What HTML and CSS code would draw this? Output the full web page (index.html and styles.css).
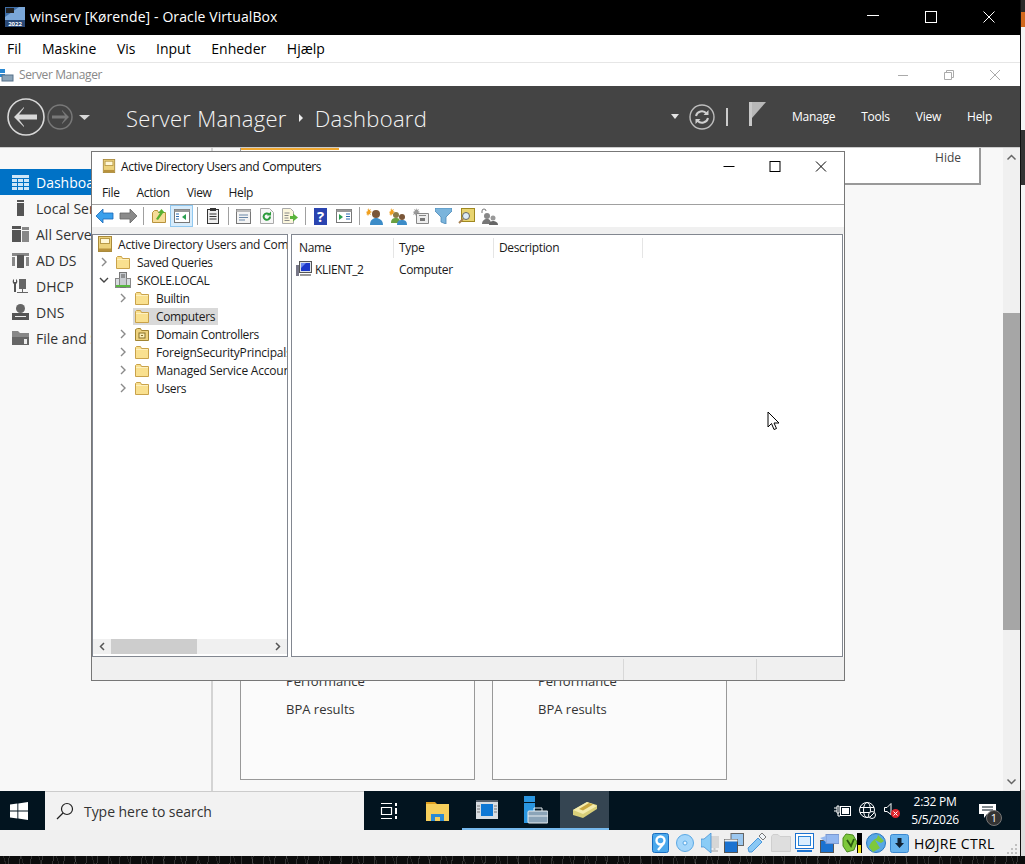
FILE: index.html
```html
<!DOCTYPE html>
<html lang="da">
<head>
    <meta charset="UTF-8">
    <title>winserv [Kørende] - Oracle VirtualBox</title>
    <link rel="stylesheet" href="styles.css">
</head>
<body>
<svg class="defs" width="0" height="0">
    <symbol id="folder" viewBox="0 0 16 16">
        <path d="M1.500 3.500V14.500H14.500V4.500H7.500L6.500 2.500H2.500Z" fill="#f9e08f" stroke="#c9a24a"/>
        <path d="M2 5.500H14" stroke="#fdf0c0" fill="none"/>
    </symbol>
    <symbol id="chev-r" viewBox="0 0 8 10"><path d="M2 1l4 4-4 4" fill="none" stroke="#8a8a8a" stroke-width="1.400"/></symbol>
    <symbol id="chev-d" viewBox="0 0 10 8"><path d="M1 2l4 4 4-4" fill="none" stroke="#444" stroke-width="1.400"/></symbol>
    <symbol id="book" viewBox="0 0 16 16">
        <rect x="1.500" y="0.500" width="13" height="15" fill="#ecd27c" stroke="#a98a3c"/>
        <rect x="3.500" y="2.500" width="9" height="5" fill="#fff8d8" stroke="#b89a48"/>
        <rect x="2" y="12.500" width="12" height="2.500" fill="#b8923c"/>
    </symbol>
</svg>

<div class="screen">
    <div class="vbox">
        <div class="vm-title">
            <svg class="vm-logo" width="20" height="20" viewBox="0 0 20 20">
                <rect width="20" height="20" fill="#3f6fa8"/>
                <path d="M0 20V10L14 0H20V20Z" fill="#7aa7d8"/>
                <rect y="13" width="20" height="7" fill="#2a4a78"/>
                <rect x="1" y="1" width="8" height="5" fill="#222"/>
                <text x="10" y="19" class="vm-logo-text">2022</text>
            </svg>
            <span class="vm-title-text">winserv [Kørende] - Oracle VirtualBox</span>
            <div class="win-btns vm-btns">
                <svg width="58" height="14" viewBox="0 0 14 14" class="wb"><path d="M1 5.500H13" stroke="#fff"/></svg>
                <svg width="58" height="14" viewBox="0 0 14 14" class="wb"><rect x="1.500" y="1.500" width="11" height="11" fill="none" stroke="#fff"/></svg>
                <svg width="58" height="14" viewBox="0 0 14 14" class="wb"><path d="M1.500 1.500l11 11M12.500 1.500l-11 11" stroke="#fff"/></svg>
            </div>
        </div>
        <div class="vm-menu">
            <span>Fil</span><span>Maskine</span><span>Vis</span><span>Input</span><span>Enheder</span><span>Hjælp</span>
        </div>

        <div class="guest">
            <div class="sm-title">
                <svg width="14" height="14" viewBox="0 0 14 14">
                    <rect width="5" height="4" y="1" fill="#2a8ad4"/><rect width="5" height="3" y="6" fill="#2a8ad4"/>
                    <rect x="2" y="7" width="11" height="6" fill="#8ba4b8" stroke="#55718a"/>
                </svg>
                <span class="sm-title-text">Server Manager</span>
                <div class="win-btns sm-btns">
                    <svg width="46" height="12" viewBox="0 0 12 12"><path d="M1 6.500H11" stroke="#aaa"/></svg>
                    <svg width="46" height="12" viewBox="0 0 12 12"><path d="M1.500 3.500h7v7h-7zM3.500 3.500v-2h7v7h-2" fill="none" stroke="#aaa"/></svg>
                    <svg width="46" height="12" viewBox="0 0 12 12"><path d="M1 1l10 10M11 1L1 11" stroke="#aaa"/></svg>
                </div>
            </div>

            <div class="sm-head">
                <svg class="nav" width="90" height="38" viewBox="0 0 90 38">
                    <circle cx="19" cy="19" r="18" fill="none" stroke="#d8d8d8" stroke-width="1.600"/>
                    <path d="M7 19l10-10v1l-5 6.500h18v5H12l5 6.500v1z" fill="#d8d8d8"/>
                    <circle cx="53" cy="19" r="12" fill="none" stroke="#787878" stroke-width="1.500"/>
                    <path d="M62 19l-7-7v1l3 4.500H45v3h13l-3 4.500v1z" fill="#787878"/>
                    <path d="M72 17h11l-5.500 5z" fill="#d8d8d8"/>
                </svg>
                <div class="crumb">
                    <span>Server Manager</span>
                    <svg width="6" height="10" viewBox="0 0 6 10"><path d="M1 1l4 4-4 4z" fill="#eee"/></svg>
                    <span>Dashboard</span>
                </div>
                <div class="head-tools">
                    <svg width="8" height="5" viewBox="0 0 8 5"><path d="M0 0h8L4 5z" fill="#e4e4e4"/></svg>
                    <svg class="refresh" width="26" height="26" viewBox="0 0 26 26">
                        <circle cx="13" cy="13" r="12" fill="none" stroke="#bdbdbd" stroke-width="1.400"/>
                        <path d="M7 12a6 6 0 0 1 10.500-2.500M19 14a6 6 0 0 1-10.500 2.500" fill="none" stroke="#cfcfcf" stroke-width="2"/>
                        <path d="M19.500 6v5h-5zM6.500 20v-5h5z" fill="#cfcfcf"/>
                    </svg>
                    <span class="pipe"></span>
                    <svg class="flag" width="18" height="24" viewBox="0 0 18 24">
                        <rect width="3" height="24" fill="#c8c8c8"/><path d="M3 0h14L3 16z" fill="#b8b8b8"/>
                    </svg>
                    <nav class="head-menu">
                        <span>Manage</span><span>Tools</span><span>View</span><span>Help</span>
                    </nav>
                </div>
            </div>

            <div class="sm-body">
                <aside class="sidebar">
                    <div class="side-item active">
                        <svg width="17" height="15" viewBox="0 0 17 15"><path d="M0 0h17v3H0zM0 4h5v3H0zM6 4h5v3H6zM12 4h5v3h-5zM0 8h5v3H0zM6 8h5v3H6zM12 8h5v3h-5zM0 12h5v3H0zM6 12h5v3H6zM12 12h5v3h-5z" fill="#cfe6f7"/></svg>
                        <span>Dashboard</span>
                    </div>
                    <div class="side-item">
                        <svg width="17" height="16" viewBox="0 0 17 16"><path d="M5 0h7v2H5zM5 3h7v13H5z" fill="#555"/></svg>
                        <span>Local Server</span>
                    </div>
                    <div class="side-item">
                        <svg width="17" height="16" viewBox="0 0 17 16"><path d="M0 0h9v3H0zM0 4h9v12H0z" fill="#555"/><path d="M10 1h7v3h-7zM10 5h7v11h-7z" fill="#888"/></svg>
                        <span>All Servers</span>
                    </div>
                    <div class="side-item">
                        <svg width="17" height="16" viewBox="0 0 17 16"><path d="M0 1h17v3H0zM0 5h3v9H0zM14 5h3v9h-3z" fill="#888"/><path d="M5 3h7v13H5z" fill="#555"/></svg>
                        <span>AD DS</span>
                    </div>
                    <div class="side-item">
                        <svg width="17" height="16" viewBox="0 0 17 16"><path d="M2 1a3 3 0 0 0 0 5v8h2V6a3 3 0 0 0 0-5v3H2z" fill="#555"/><path d="M7 1h7v10H7zM10 11h1v3h5v1H5v-1h5z" fill="#666"/></svg>
                        <span>DHCP</span>
                    </div>
                    <div class="side-item">
                        <svg width="17" height="16" viewBox="0 0 17 16"><circle cx="8.500" cy="4.500" r="4.500" fill="#666"/><path d="M0 9h17v7H0z" fill="#555"/><path d="M3 12h11v1H3z" fill="#eee"/></svg>
                        <span>DNS</span>
                    </div>
                    <div class="side-item">
                        <svg width="17" height="16" viewBox="0 0 17 16"><path d="M0 1h6l2 2h9v4H0z" fill="#888"/><path d="M0 7h17v8H0z" fill="#666"/><path d="M12 9h3v5h-3z" fill="#eee"/></svg>
                        <span>File and Storage Services</span>
                    </div>
                </aside>

                <main class="sm-main">
                    <section class="quick">
                        <div class="quick-tab"></div>
                        <span class="hide">Hide</span>
                    </section>
                    <div class="tiles">
                        <div class="tile">
                            <p>Manageability</p><p>Events</p><p>Services</p><p>Performance</p><p>BPA results</p>
                        </div>
                        <div class="tile">
                            <p>Manageability</p><p>Events</p><p>Services</p><p>Performance</p><p>BPA results</p>
                        </div>
                    </div>
                </main>

                <div class="sm-scroll">
                    <svg width="11" height="7" viewBox="0 0 11 7"><path d="M1.500 5.500l4-4 4 4" fill="none" stroke="#666" stroke-width="1.500"/></svg>
                    <div class="sm-thumb"></div>
                    <svg width="11" height="7" viewBox="0 0 11 7"><path d="M1.500 1.500l4 4 4-4" fill="none" stroke="#666" stroke-width="1.500"/></svg>
                </div>
            </div>

            <div class="taskbar">
                <div class="start">
                    <svg width="18" height="18" viewBox="0 0 18 18"><path d="M0 2.600l7.400-1v7H0zM8.300 1.400L18 0v8.600H8.300zM0 9.500h7.400v7l-7.400-1zM8.300 9.500H18V18l-9.700-1.400z" fill="#fff"/></svg>
                </div>
                <div class="search">
                    <svg width="18" height="18" viewBox="0 0 18 18"><circle cx="11" cy="7" r="5.500" fill="none" stroke="#222" stroke-width="1.200"/><path d="M7 11l-6 6" stroke="#222" stroke-width="1.300"/></svg>
                    <span>Type here to search</span>
                </div>
                <div class="task">
                    <svg width="18" height="18" viewBox="0 0 18 18"><path d="M1 1.500h11M1 16.500h11M1.500 5.500h10v7h-10z" fill="none" stroke="#fff" stroke-width="1.200"/><path d="M15 1h2v3h-2zM15 6h2v6h-2zM15 14h2v3h-2z" fill="#fff"/></svg>
                </div>
                <div class="task">
                    <svg width="23" height="20" viewBox="0 0 23 20"><path d="M0 1h9l2 2H0z" fill="#e0a020"/><path d="M0 3h23v17H0z" fill="#f6cf5c"/><path d="M5 13h13v7H5z" fill="#2a8ad4"/><path d="M9 16h5v4H9z" fill="#f6cf5c"/></svg>
                </div>
                <div class="task on">
                    <svg width="22" height="19" viewBox="0 0 22 19"><rect width="22" height="19" fill="#d8dde2"/><rect y="0" width="22" height="2" fill="#555f6a"/><rect x="5" y="4" width="12" height="12" fill="#0f78d4"/><path d="M1 6h3M1 9h3M1 12h3M18 6h3M18 9h3M18 12h3" stroke="#777"/></svg>
                </div>
                <div class="task on">
                    <svg width="24" height="28" viewBox="0 0 24 28"><path d="M0 0h11v6H0zM0 7h11v20H0z" fill="#2a96e0"/><rect x="4" y="15" width="20" height="12" rx="1" fill="#8ba4b8" stroke="#e8eef2"/><path d="M10 15v-3h8v3M4 20h20" fill="none" stroke="#e8eef2"/></svg>
                </div>
                <div class="task on current">
                    <svg width="24" height="18" viewBox="0 0 24 18"><path d="M0 9l14-8 10 3v4L10 17 0 14z" fill="#d8cf7a"/><path d="M0 9l10 4 14-8-10-4z" fill="#f4ecae"/><path d="M6 8l10-6 4 1.500-10 6z" fill="#c9a840"/></svg>
                </div>
                <div class="tray">
                    <svg width="17" height="12" viewBox="0 0 17 12"><path d="M0 3h3M0 6h3M3 1h2v7H3zM4 8v3h2" fill="none" stroke="#fff"/><rect x="6.500" y="1.500" width="10" height="9" fill="none" stroke="#fff"/><rect x="8" y="3" width="7" height="6" fill="#fff"/></svg>
                    <svg width="17" height="17" viewBox="0 0 17 17"><g fill="none" stroke="#fff"><circle cx="8" cy="8" r="7.500"/><ellipse cx="8" cy="8" rx="3.500" ry="7.500"/><path d="M1 5.500h14M1 10.500h14"/></g><circle cx="13" cy="13" r="3.500" fill="#02141f" stroke="#fff"/><path d="M11 15l4-4" stroke="#fff"/></svg>
                    <svg width="16" height="15" viewBox="0 0 16 15"><path d="M.5 4.500h2.500l4-4v11l-4-3H.5z" fill="none" stroke="#fff"/><circle cx="11.500" cy="10.500" r="4.500" fill="#e0242c"/><path d="M9.500 8.500l4 4M13.500 8.500l-4 4" stroke="#fff"/></svg>
                    <div class="clock"><span>2:32 PM</span><span>5/5/2026</span></div>
                    <div class="notify">
                        <svg width="17" height="14" viewBox="0 0 17 14"><path d="M0 0h17v10H8l-3 4v-4H0z" fill="#fff"/><path d="M3 3h11M3 6h11" stroke="#02141f"/></svg>
                        <span class="badge">1</span>
                    </div>
                </div>
            </div>
        </div>

        <div class="vm-status">
            <svg width="17" height="20" viewBox="0 0 17 20"><rect x=".5" y=".5" width="16" height="19" rx="2" fill="#4aa8ec" stroke="#1a6ec0"/><circle cx="8.500" cy="7.500" r="4" fill="none" stroke="#fff" stroke-width="2.400"/><path d="M12 10l-6 7" stroke="#fff" stroke-width="2.400"/></svg>
            <svg width="18" height="18" viewBox="0 0 18 18"><circle cx="9" cy="9" r="8.500" fill="#a4d6fa" stroke="#5aa8e4"/><circle cx="9" cy="9" r="2" fill="#eaf6ff" stroke="#5aa8e4"/></svg>
            <svg width="19" height="20" viewBox="0 0 19 20"><rect x="9" y="3" width="9" height="12" fill="#d6d6d6"/><path d="M10 18h7M13.500 15v3" stroke="#c8c8c8" stroke-width="2"/><path d="M0 6h3l7-6v20l-7-6H0z" fill="#8accf6" stroke="#3a88d0" stroke-width=".7"/></svg>
            <svg width="20" height="20" viewBox="0 0 20 20"><rect x="7" y=".5" width="12.500" height="12" fill="#9cc8f0" stroke="#666"/><rect x=".5" y="6.500" width="13" height="13" fill="#1b72d0" stroke="#555"/><rect x=".5" y="6.500" width="13" height="2" fill="#eee"/></svg>
            <svg width="19" height="20" viewBox="0 0 19 20"><path d="M1 15L11 5l4 4L5 19H2z" fill="#8ac8f4" stroke="#4a98dc"/><path d="M12 3l3-3 4 4-3 3z" fill="#f0f4f8" stroke="#777"/></svg>
            <svg width="20" height="18" viewBox="0 0 20 18"><path d="M.5 2.500V17.500h19V2.500H9L7 .5H2z" fill="#dedede" stroke="#cfcfcf"/></svg>
            <svg width="19" height="20" viewBox="0 0 19 20"><rect x=".5" y=".5" width="18" height="15" fill="#fff" stroke="#1b72d0"/><rect x="3" y="3" width="13" height="10" fill="#2a84d8"/><rect x="4" y="4" width="11" height="8" fill="#dbeeff"/><path d="M2 18h15" stroke="#1b72d0" stroke-width="2"/></svg>
            <svg width="19" height="19" viewBox="0 0 19 19"><rect x="0.500" y="6.500" width="13" height="12" fill="#1b72d0" stroke="#555"/><rect x="6" y="0.500" width="13" height="9" fill="#94b8f0" stroke="#7a98d0"/><path d="M0 4l6-2v6z" fill="#94b8f0"/></svg>
            <svg width="20" height="20" viewBox="0 0 20 20"><path d="M1 5l3-4 7 1 4 7-3 8-7 2-4-6z" fill="#7ec83c" stroke="#4a8a1c"/><path d="M5 7l4 6 3-7" fill="none" stroke="#2a5a10" stroke-width="1.800"/><rect x="15" y="0" width="5" height="20" fill="#000"/><rect x="16" y="12" width="3" height="8" fill="#f0e020"/></svg>
            <svg width="20" height="20" viewBox="0 0 20 20"><circle cx="10" cy="10" r="9.500" fill="#5aa8e4" stroke="#2a78c0"/><path d="M3 14c2-6 6-8 8-9l1-3 6 6-3 2-6-3 5 8-7 4z" fill="#7ec83c"/></svg>
            <svg width="19" height="19" viewBox="0 0 19 19"><rect x=".5" y=".5" width="18" height="18" rx="2" fill="#68b4ee" stroke="#3a88d0"/><path d="M7.500 4h4v5H14l-4.500 5L5 9h2.500z" fill="#123"/></svg>
            <span class="host-key">HØJRE CTRL</span>
            <svg class="grip" width="12" height="12" viewBox="0 0 12 12"><path d="M9 1h2v2H9zM5 5h2v2H5zM9 5h2v2H9zM1 9h2v2H1zM5 9h2v2H5zM9 9h2v2H9z" fill="#c0c0c0"/></svg>
        </div>
    </div>
    <div class="strip"></div>

    <!-- guest window, sits over the dashboard -->
    <div class="aduc">
        <div class="aduc-title">
            <svg width="14" height="16"><use href="#book"/></svg>
            <span>Active Directory Users and Computers</span>
            <div class="win-btns aduc-btns">
                <svg width="46" height="11" viewBox="0 0 11 11"><path d="M0 5.500H11" stroke="#000"/></svg>
                <svg width="46" height="11" viewBox="0 0 11 11"><rect x=".5" y=".5" width="10" height="10" fill="none" stroke="#000"/></svg>
                <svg width="46" height="11" viewBox="0 0 11 11"><path d="M.5.500l10 10M10.500.500l-10 10" stroke="#000"/></svg>
            </div>
        </div>
        <div class="aduc-menu"><span>File</span><span>Action</span><span>View</span><span>Help</span></div>

        <div class="toolbar">
            <div class="tb"><svg width="18" height="14" viewBox="0 0 18 14"><path d="M0 7l7-7v4h10v6H7v4z" fill="#3aa0ec" stroke="#1a68b8" stroke-width=".8"/></svg></div>
            <div class="tb"><svg width="18" height="14" viewBox="0 0 18 14"><path d="M18 7l-7-7v4H1v6h10v4z" fill="#8a8a8a" stroke="#666" stroke-width=".8"/></svg></div>
            <div class="tb-sep"></div>
            <div class="tb"><svg width="16" height="16" viewBox="0 0 16 16"><path d="M1.500 4.500v10h13v-10H7.500l-1-2h-3z" fill="#f6dc98" stroke="#b8923c"/><path d="M5 11l4-6H7l3.500-4L14 5h-2l-5 7z" fill="#58b030"/></svg></div>
            <div class="tb tb-on"><svg width="16" height="14" viewBox="0 0 16 14"><rect x=".5" y=".5" width="15" height="13" fill="#fff" stroke="#777"/><rect x=".5" y=".5" width="15" height="2.500" fill="#999"/><path d="M2 5h3M2 7.500h3M2 10h3" stroke="#2a6ab0"/><path d="M12 5v6L8 8z" fill="#2aa050"/></svg></div>
            <div class="tb-sep"></div>
            <div class="tb"><svg width="12" height="16" viewBox="0 0 12 16"><rect x=".5" y="1.500" width="11" height="14" fill="#eee" stroke="#333"/><rect x="3" y="0" width="6" height="3" fill="#333"/><path d="M2.500 6h7M2.500 8.500h7M2.500 11h7" stroke="#333"/></svg></div>
            <div class="tb-sep"></div>
            <div class="tb"><svg width="15" height="15" viewBox="0 0 15 15"><rect x=".5" y=".5" width="14" height="14" fill="#f4f4f4" stroke="#777"/><rect x=".5" y=".5" width="14" height="2.500" fill="#bbb"/><path d="M3 6h9M3 8.500h9M3 11h6" stroke="#6a88a8"/></svg></div>
            <div class="tb"><svg width="14" height="16" viewBox="0 0 14 16"><path d="M.5.500h9l4 4v11H.5z" fill="#f6f6f6" stroke="#aaa"/><path d="M10 8.500a3.200 3.200 0 1 1-1-2.200" fill="none" stroke="#2a9a3a" stroke-width="2"/><path d="M11 3.500v4H7z" fill="#2a9a3a"/></svg></div>
            <div class="tb"><svg width="16" height="16" viewBox="0 0 16 16"><path d="M.5.500h8l3 3v12H.5z" fill="#fbf6dc" stroke="#aaa"/><path d="M2.500 5h5M2.500 7.500h4M2.500 10h4M2.500 12.500h5" stroke="#888"/><path d="M8 8h3V5.500L16 9.500l-5 4V11H8z" fill="#5ab43a"/></svg></div>
            <div class="tb-sep"></div>
            <div class="tb"><svg width="13" height="17" viewBox="0 0 13 17"><rect width="13" height="17" fill="#2a44b0"/><text x="6.500" y="14" class="help-q">?</text></svg></div>
            <div class="tb"><svg width="16" height="14" viewBox="0 0 16 14"><rect x=".5" y=".5" width="15" height="13" fill="#fff" stroke="#777"/><rect x=".5" y=".5" width="15" height="2.500" fill="#999"/><path d="M3 5v6l4-3z" fill="#2aa050"/><path d="M10 5h4M10 7.500h4M10 10h4" stroke="#2a6ab0"/></svg></div>
            <div class="tb-sep"></div>
            <div class="tb"><svg width="18" height="17" viewBox="0 0 18 17"><path d="M2 0l1 2 2-1-1 2 2 1-2 1 1 2-2-1-1 2-1-2-1 1 1-2-1-1 2-1-1-2 1 1z" fill="#f0a020"/><circle cx="10" cy="6" r="4" fill="#7a5638"/><path d="M4 17c0-5 3-7 6-7s7 2 7 7z" fill="#3c8cc8"/></svg></div>
            <div class="tb"><svg width="18" height="17" viewBox="0 0 18 17"><path d="M2 0l1 2 2-1-1 2 2 1-2 1 1 2-2-1-1 2-1-2-1 1 1-2-1-1 2-1-1-2 1 1z" fill="#f0a020"/><circle cx="7" cy="7" r="3" fill="#8a7a48"/><path d="M2 15c0-4 2-5 5-5s4 1 4 5z" fill="#6aa040"/><circle cx="13" cy="9" r="3" fill="#7a5638"/><path d="M8 17c0-4 2-5 5-5s5 1 5 5z" fill="#3c8cc8"/></svg></div>
            <div class="tb"><svg width="16" height="16" viewBox="0 0 16 16"><path d="M3 0l1 2 2-1-1 2 2 1-2 1 1 2-2-1-1 2-1-2-2 1 1-2-1-1 2-1-1-2 2 1z" fill="#999"/><path d="M3.500 5.500h12v10h-12z" fill="#eee" stroke="#888"/><path d="M6 7h7v1H6z" fill="#888"/><rect x="7" y="10" width="5" height="3" fill="#777"/></svg></div>
            <div class="tb"><svg width="17" height="16" viewBox="0 0 17 16"><path d="M0 0h17v3l-6 6v7l-5-2V9L0 3z" fill="#7ab4dc" stroke="#4a88b8" stroke-width=".8"/></svg></div>
            <div class="tb"><svg width="17" height="16" viewBox="0 0 17 16"><rect x="3.500" y=".5" width="13" height="13" fill="#e8d470" stroke="#a08820"/><circle cx="8" cy="8" r="3.500" fill="#dcecf8" stroke="#666"/><path d="M5 11L1 15" stroke="#a88050" stroke-width="2"/></svg></div>
            <div class="tb"><svg width="17" height="17" viewBox="0 0 17 17"><path d="M1 5V3a2 2 0 0 1 4 0" fill="none" stroke="#777"/><circle cx="6" cy="8" r="3" fill="#888"/><path d="M1 16c0-3 2-5 5-5s4 2 4 5z" fill="#777"/><circle cx="12" cy="10" r="2.500" fill="#999"/><path d="M8 17c0-3 2-4 4-4s5 1 5 4z" fill="#666"/></svg></div>
        </div>
        <div class="band"></div>

        <div class="panes">
            <div class="tree">
                <div class="tree-rows">
                    <div class="node root wide"><svg width="16" height="16"><use href="#book"/></svg><span>Active Directory Users and Computers</span></div>
                    <div class="node lvl1"><svg class="exp" width="8" height="10"><use href="#chev-r"/></svg><svg width="16" height="16"><use href="#folder"/></svg><span>Saved Queries</span></div>
                    <div class="node lvl1"><svg class="exp exp-open" width="10" height="8"><use href="#chev-d"/></svg>
                        <svg width="16" height="16" viewBox="0 0 16 16"><rect x="4.500" y=".5" width="7" height="15" fill="#c8ccd0" stroke="#777"/><rect x=".5" y="6.500" width="4" height="9" fill="#d8dce0" stroke="#888"/><rect x="11.500" y="6.500" width="4" height="9" fill="#d8dce0" stroke="#888"/><path d="M6 3h4M6 5h4" stroke="#555"/><rect x="1" y="13" width="14" height="2" fill="#58b840"/></svg>
                        <span>SKOLE.LOCAL</span></div>
                    <div class="node lvl2"><svg class="exp" width="8" height="10"><use href="#chev-r"/></svg><svg width="16" height="16"><use href="#folder"/></svg><span>Builtin</span></div>
                    <div class="node lvl2"><i class="exp-gap"></i><span class="sel"><svg width="16" height="16"><use href="#folder"/></svg><span>Computers</span></span></div>
                    <div class="node lvl2"><svg class="exp" width="8" height="10"><use href="#chev-r"/></svg>
                        <svg width="16" height="16" viewBox="0 0 16 16"><path d="M1.500 3.500v11h13v-10H7.500l-1-2h-3z" fill="#eed27e" stroke="#a08432"/><rect x="5" y="7" width="6" height="5" fill="#fbeeb8" stroke="#887028"/><rect x="7" y="9" width="2" height="1" fill="#887028"/></svg>
                        <span>Domain Controllers</span></div>
                    <div class="node lvl2 wide"><svg class="exp" width="8" height="10"><use href="#chev-r"/></svg><svg width="16" height="16"><use href="#folder"/></svg><span>ForeignSecurityPrincipals</span></div>
                    <div class="node lvl2 wide"><svg class="exp" width="8" height="10"><use href="#chev-r"/></svg><svg width="16" height="16"><use href="#folder"/></svg><span>Managed Service Accounts</span></div>
                    <div class="node lvl2"><svg class="exp" width="8" height="10"><use href="#chev-r"/></svg><svg width="16" height="16"><use href="#folder"/></svg><span>Users</span></div>
                </div>
                <div class="hscroll">
                    <svg width="6" height="9" viewBox="0 0 6 9"><path d="M5 1L1.500 4.500 5 8" fill="none" stroke="#555" stroke-width="1.500"/></svg>
                    <div class="hthumb-track"><div class="hthumb"></div></div>
                    <svg width="6" height="9" viewBox="0 0 6 9"><path d="M1 1l3.500 3.500L1 8" fill="none" stroke="#555" stroke-width="1.500"/></svg>
                </div>
            </div>
            <div class="list">
                <div class="list-head">
                    <span class="col-name">Name</span><span class="col-type">Type</span><span class="col-desc">Description</span>
                </div>
                <div class="list-row">
                    <span class="cell-name">
                        <svg width="16" height="16" viewBox="0 0 16 16"><rect x="3.500" y=".5" width="12" height="11" fill="#dfe4ea" stroke="#555"/><rect x="5" y="2" width="9" height="8" fill="#1c38c8"/><path d="M5 2h5L5 7z" fill="#6a88f0"/><rect x="0" y="4" width="3" height="11" fill="#778"/><path d="M4 13h11v2H4z" fill="#999"/></svg>
                        <span>KLIENT_2</span>
                    </span>
                    <span class="cell-type">Computer</span>
                </div>
                <svg class="cursor" width="13" height="20" viewBox="0 0 13 20"><path d="M1 1v15l3.500-3.500L7 18.500l2.500-1-2.500-5.500h5z" fill="#fff" stroke="#000"/></svg>
            </div>
        </div>
        <div class="aduc-status">
            <div class="st st-main"></div><div class="st st-mid"></div><div class="st st-end"></div>
        </div>
    </div>
</div>
</body>
</html>
```

FILE: styles.css
```css
* {
    box-sizing: border-box;
}

html, body {
    margin: 0;
    padding: 0;
}

body {
    font-family: "Open Sans", "Noto Sans", sans-serif;
    font-size: 12px;
    color: #222;
    overflow: hidden;
}

svg {
    display: block;
    flex-shrink: 0;
}

.defs {
    position: absolute;
}

.screen {
    position: relative;
    display: flex;
    width: 1025px;
    height: 864px;
    overflow: hidden;
    background-color: #0c0c0c;
    background-image:
        repeating-linear-gradient(97deg, transparent 0 3px, rgba(255, 255, 255, .16) 3px 4px, transparent 4px 11px),
        repeating-linear-gradient(74deg, transparent 0 5px, rgba(255, 255, 255, .1) 5px 6px, transparent 6px 17px);
}

.strip {
    width: 4px;
    height: 856px;
    background: linear-gradient(#2a2a2a 0 12px, #d2691e 12px 27px, #f4f4f4 27px 130px, #333 130px 185px, #f4f4f4 185px 790px, #ddd 790px);
}

.vbox {
    display: flex;
    flex-direction: column;
    width: 1021px;
    height: 856px;
    border-right: 1px solid #111;
}

/* virtualbox frame */
.vm-title {
    display: flex;
    align-items: center;
    height: 35px;
    padding: 0 2px 2px 5px;
    background: #000;
    color: #fff;
}

.vm-logo-text {
    font-size: 6px;
    font-weight: 700;
    fill: #fff;
    text-anchor: middle;
}

.vm-title-text {
    margin-left: 5px;
    font-size: 14px;
    letter-spacing: .1px;
}

.win-btns {
    display: flex;
    margin-left: auto;
}

.vm-menu {
    display: flex;
    align-items: center;
    gap: 20.600px;
    height: 28px;
    padding-left: 7px;
    background: #fff;
    border-bottom: 1px solid #e6e6e6;
    font-size: 14px;
    color: #000;
}

.guest {
    display: flex;
    flex-direction: column;
    height: 767px;
}

.vm-status {
    display: flex;
    align-items: center;
    height: 26px;
    padding-left: 652px;
    background: #f0f0f0;
}

.vm-status svg:nth-child(2) { margin-left: 7px; }
.vm-status svg:nth-child(3) { margin-left: 7px; }
.vm-status svg:nth-child(4) { margin-left: 4px; }
.vm-status svg:nth-child(5) { margin-left: 3px; }
.vm-status svg:nth-child(6) { margin-left: 5px; }
.vm-status svg:nth-child(7) { margin-left: 4px; }
.vm-status svg:nth-child(8) { margin-left: 6px; }
.vm-status svg:nth-child(9) { margin-left: 3px; }
.vm-status svg:nth-child(10) { margin-left: 4px; }
.vm-status svg:nth-child(11) { margin-left: 4px; }

.host-key {
    margin-left: 5px;
    font-size: 14px;
    letter-spacing: .3px;
    color: #000;
}

.grip {
    margin-left: auto;
    margin-right: 2px;
    align-self: flex-end;
    margin-bottom: 1px;
}

/* server manager */
.sm-title {
    display: flex;
    align-items: center;
    height: 23px;
    background: #fff;
}

.sm-title-text {
    margin-left: 5px;
    color: #888;
    letter-spacing: -.4px;
}

.sm-btns {
    margin-right: 2px;
}

.sm-head {
    display: flex;
    align-items: center;
    height: 62px;
    padding-left: 7px;
    background: #444;
    color: #fff;
    border-bottom: 1px solid #ccc;
}

.nav {
    margin-right: 29px;
}

.crumb {
    display: flex;
    align-items: center;
    gap: 11px;
    margin-top: 3px;
    font-size: 22px;
    font-weight: 300;
    letter-spacing: .3px;
    color: #f4f4f4;
}

.head-tools {
    display: flex;
    align-items: center;
    margin-left: auto;
}

.refresh {
    margin-left: 10px;
}

.pipe {
    width: 2px;
    height: 18px;
    margin-left: 11px;
    background: #ccc;
}

.flag {
    margin-left: 21px;
    margin-bottom: 6px;
}

.head-menu {
    display: flex;
    gap: 26px;
    margin-left: 25px;
    margin-right: 28px;
    letter-spacing: -.25px;
}

.sm-body {
    display: flex;
    flex: 1;
    min-height: 0;
    background: #f8f8f8;
}

.sidebar {
    width: 213px;
    padding-top: 21px;
    border-right: 2px solid #d4d4d4;
}

.side-item {
    display: flex;
    align-items: center;
    height: 26px;
    padding-left: 12px;
    gap: 7px;
    font-size: 14px;
    white-space: nowrap;
    color: #333;
}

.side-item.active {
    background: #0072c6;
    color: #fff;
}

.sm-main {
    display: flex;
    flex-direction: column;
    flex: 1;
    min-width: 0;
    padding: 0 22px 11px 27px;
}

.quick {
    position: relative;
    display: flex;
    justify-content: flex-end;
    height: 37px;
    padding: 1px 18px 0 0;
    background: #fff;
    border: solid #999;
    border-width: 0 2px 2px 1px;
    color: #444;
}

.quick-tab {
    position: absolute;
    left: 0;
    top: 0;
    width: 98px;
    height: 2px;
    background: #f0a830;
}

.tiles {
    display: flex;
    gap: 17px;
    margin-top: auto;
}

.tile {
    width: 235px;
    height: 240px;
    padding: 42px 0 0 45px;
    background: #fbfbfb;
    border: 1px solid #999;
    font-size: 13px;
    color: #333;
}

.tile p {
    margin: 0;
    height: 28px;
    line-height: 28px;
}

.sm-scroll {
    display: flex;
    flex-direction: column;
    align-items: center;
    justify-content: space-between;
    width: 17px;
    padding: 6px 0;
    background: #f0f0f0;
    position: relative;
}

.sm-thumb {
    position: absolute;
    left: 0;
    top: 165px;
    width: 17px;
    height: 317px;
    background: #a6a6a6;
}

/* taskbar */
.taskbar {
    display: flex;
    height: 39px;
    background: #02141f;
    color: #fff;
}

.start {
    display: flex;
    align-items: center;
    justify-content: center;
    width: 45px;
    padding-right: 7px;
}

.search {
    display: flex;
    align-items: center;
    gap: 10px;
    width: 319px;
    padding-left: 11px;
    background: #f2f2f2;
    border-top: 1px solid #ccc;
    font-size: 14px;
    letter-spacing: -.05px;
    color: #333;
}

.task {
    display: flex;
    align-items: center;
    justify-content: center;
    width: 49px;
    height: 100%;
}

.task.on {
    border-bottom: 2px solid #76b9ed;
}

.task.current {
    background: #354552;
}

.tray {
    display: flex;
    align-items: center;
    margin-left: auto;
    padding-right: 24px;
    gap: 8px;
}

.clock {
    display: flex;
    flex-direction: column;
    align-items: center;
    width: 66px;
    line-height: 18px;
    margin-left: -6px;
    letter-spacing: -.3px;
}

.notify {
    position: relative;
    margin-left: 3px;
}

.badge {
    position: absolute;
    left: 7px;
    top: 6px;
    width: 16px;
    height: 16px;
    border-radius: 50%;
    background: #333;
    border: 1px solid #777;
    font-size: 11px;
    line-height: 14px;
    text-align: center;
}

/* active directory window */
.aduc {
    position: absolute;
    left: 91px;
    top: 151px;
    display: flex;
    flex-direction: column;
    width: 754px;
    height: 530px;
    background: #fff;
    border: 1px solid #777;
    color: #1a1a1a;
    letter-spacing: -.35px;
}

.aduc-title {
    display: flex;
    align-items: center;
    height: 28px;
    padding-left: 10px;
    gap: 5px;
    color: #111;
}

.aduc-menu {
    display: flex;
    align-items: center;
    gap: 17px;
    height: 25px;
    padding-left: 10px;
    border-bottom: 1px solid #a0a0a0;
}

.toolbar {
    display: flex;
    align-items: center;
    height: 22px;
    padding-left: 1px;
}

.tb {
    display: flex;
    align-items: center;
    justify-content: center;
    width: 23px;
    height: 22px;
}

.tb-on {
    background: #d8ecfb;
    border: 1px solid #90c8f0;
}

.tb-sep {
    width: 8px;
    height: 18px;
    background: linear-gradient(#a0a0a0, #a0a0a0) center / 1px 100% no-repeat;
}

.help-q {
    font-size: 15px;
    font-weight: 700;
    fill: #fff;
    text-anchor: middle;
}

.band {
    height: 7px;
    background: #f0f0f0;
}

.panes {
    display: flex;
    gap: 3px;
    height: 423px;
    padding: 0 1px 0 0;
}

.tree {
    display: flex;
    flex-direction: column;
    width: 196px;
    border: 1px solid #828790;
}

.tree-rows {
    flex: 1;
    overflow: hidden;
}

.node {
    display: flex;
    align-items: center;
    height: 18px;
    white-space: nowrap;
}

.node.wide {
    letter-spacing: -.2px;
}

.root {
    padding-left: 4px;
}

.lvl1 {
    padding-left: 7px;
}

.lvl2 {
    padding-left: 26px;
}

.exp, .exp-gap {
    display: block;
    margin-right: 7px;
    width: 8px;
}

.exp-open {
    width: 10px;
    margin-left: -1px;
    margin-right: 6px;
}

.node > svg:not(.exp) + span {
    margin-left: 6px;
}

.root > svg:not(.exp) + span {
    margin-left: 5px;
}

.sel {
    display: flex;
    align-items: center;
    gap: 6px;
    height: 17px;
    padding: 0 3px 0 1px;
    margin-left: -1px;
    background: #d9d9d9;
}

.hscroll {
    display: flex;
    align-items: center;
    justify-content: space-between;
    height: 15px;
    margin-bottom: 2px;
    padding: 0 6px;
    background: #f0f0f0;
}

.hthumb-track {
    flex: 1;
    height: 15px;
    padding-left: 6px;
}

.hthumb {
    width: 86px;
    height: 15px;
    background: #cdcdcd;
}

.list {
    position: relative;
    flex: 1;
    border: 1px solid #828790;
}

.list-head {
    display: flex;
    align-items: center;
    height: 24px;
    padding-top: 2px;
}

.list-head span {
    display: block;
    height: 20px;
    line-height: 20px;
    border-right: 1px solid #e5e5e5;
}

.col-name {
    width: 102px;
    padding-left: 7px;
}

.col-type {
    width: 100px;
    padding-left: 5px;
}

.col-desc {
    width: 149px;
    padding-left: 5px;
}

.list-row {
    display: flex;
    align-items: center;
    height: 18px;
    margin-top: 1px;
}

.cell-name {
    display: flex;
    align-items: center;
    gap: 3px;
    width: 102px;
    padding-left: 4px;
}

.cell-type {
    padding-left: 5px;
}

.cursor {
    position: absolute;
    left: 475px;
    top: 176px;
}

.aduc-status {
    display: flex;
    flex: 1;
    padding-top: 2px;
    background: #f0f0f0;
}

.st {
    border-right: 1px solid #d8d8d8;
}

.st-main {
    width: 532px;
}

.st-mid {
    width: 133px;
}

.st-end {
    flex: 1;
    border: 0;
}
```
